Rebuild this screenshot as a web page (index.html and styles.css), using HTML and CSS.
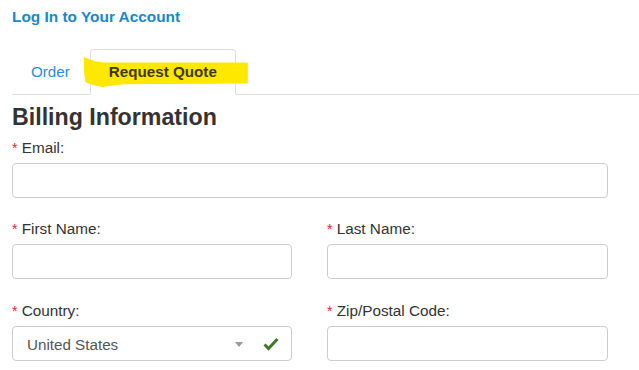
FILE: index.html
```html
<!DOCTYPE html>
<html lang="en">
<head>
    <meta charset="UTF-8">
    <meta name="viewport" content="width=device-width, initial-scale=1.0">
    <title>Request Quote</title>
    <link rel="stylesheet" href="styles.css">
</head>
<body>
    <a href="#" class="login-link">Log In to Your Account</a>

    <ul class="tabs">
        <li><a href="#">Order</a></li>
        <li class="active">
            <span class="highlight"></span>
            <a href="#">Request Quote</a>
        </li>
    </ul>

    <div class="content">
        <h2>Billing Information</h2>
        <form>
            <div class="field">
                <label for="email"><span class="req">*</span> Email:</label>
                <input type="email" id="email" name="email">
            </div>

            <div class="row">
                <div class="field">
                    <label for="first"><span class="req">*</span> First Name:</label>
                    <input type="text" id="first" name="first">
                </div>
                <div class="field">
                    <label for="last"><span class="req">*</span> Last Name:</label>
                    <input type="text" id="last" name="last">
                </div>
            </div>

            <div class="row">
                <div class="field">
                    <label><span class="req">*</span> Country:</label>
                    <div class="select">
                        <span class="select-value">United States</span>
                        <span class="caret"></span>
                        <svg class="check" width="16" height="14" viewBox="0 0 16 14">
                            <path d="M1.5 7.5 L5.5 11.5 L14.5 2" fill="none" stroke="#3b7a2b" stroke-width="3"/>
                        </svg>
                    </div>
                </div>
                <div class="field">
                    <label for="zip"><span class="req">*</span> Zip/Postal Code:</label>
                    <input type="text" id="zip" name="zip">
                </div>
            </div>
        </form>
    </div>
</body>
</html>
```

FILE: styles.css
```css
body {
    font-family: "Liberation Sans", Arial, sans-serif;
    margin: 0;
    padding: 7px 0 0 12px;
    background-color: #fff;
    color: #333;
}

.login-link {
    display: block;
    font-size: 15.4px;
    font-weight: bold;
    line-height: 20px;
    color: #1a87c9;
    text-decoration: none;
}

.tabs {
    list-style: none;
    margin: 22px 0 0 0;
    padding: 0;
    display: flex;
    border-bottom: 1px solid #ddd;
}

.tabs li {
    position: relative;
    margin-right: 1px;
    margin-bottom: -1px;
    border: 1px solid transparent;
    border-radius: 4px 4px 0 0;
}

.tabs li a {
    position: relative;
    z-index: 1;
    display: block;
    padding: 0 18px;
    line-height: 44px;
    font-size: 15.2px;
    color: #2a8fd2;
    text-decoration: none;
}

.tabs li.active {
    border-color: #ddd #ddd transparent;
    background-color: #fff;
}

.tabs li.active a {
    font-weight: bold;
    color: #3d3800;
}

/* marker stroke over the active tab */
.highlight {
    position: absolute;
    left: -7px;
    top: 7px;
    width: 164px;
    height: 30px;
    background-color: #ffe800;
    clip-path: polygon(0 0, 7% 14%, 12% 18%, 100% 18%, 100% 88%, 24% 91%, 11% 100%, 6% 94%, 1% 84%, 0 45%);
}

.content {
    width: 596px;
}

h2 {
    margin: 9px 0 8px;
    font-size: 23.2px;
    line-height: 26px;
    color: #333;
}

form {
    display: flex;
    flex-direction: column;
}

.row {
    display: grid;
    grid-template-columns: 280px 281px;
    gap: 35px;
}

.field {
    margin-bottom: 21px;
}

label {
    display: block;
    font-size: 15.3px;
    line-height: 20px;
    margin-bottom: 5px;
    color: #333;
}

.req {
    color: #e8202a;
    font-size: 14px;
}

input[type="text"],
input[type="email"] {
    display: block;
    box-sizing: border-box;
    width: 100%;
    height: 35px;
    border: 1px solid #ccc;
    border-radius: 4px;
    padding: 0 14px;
    font-family: inherit;
    font-size: 15px;
}

.row .field:first-child,
.row .field:last-child {
    min-width: 0;
}

.row + .row {
    margin-top: 1px;
}

.select {
    display: flex;
    align-items: center;
    box-sizing: border-box;
    height: 35px;
    border: 1px solid #ccc;
    border-radius: 4px;
    padding: 1px 12px 0 14px;
    font-size: 15.2px;
    color: #555;
}

.select-value {
    flex: 1;
}

.caret {
    width: 0;
    height: 0;
    border-left: 4px solid transparent;
    border-right: 4px solid transparent;
    border-top: 5px solid #999;
    margin-right: 20px;
}

.check {
    display: block;
}
```
